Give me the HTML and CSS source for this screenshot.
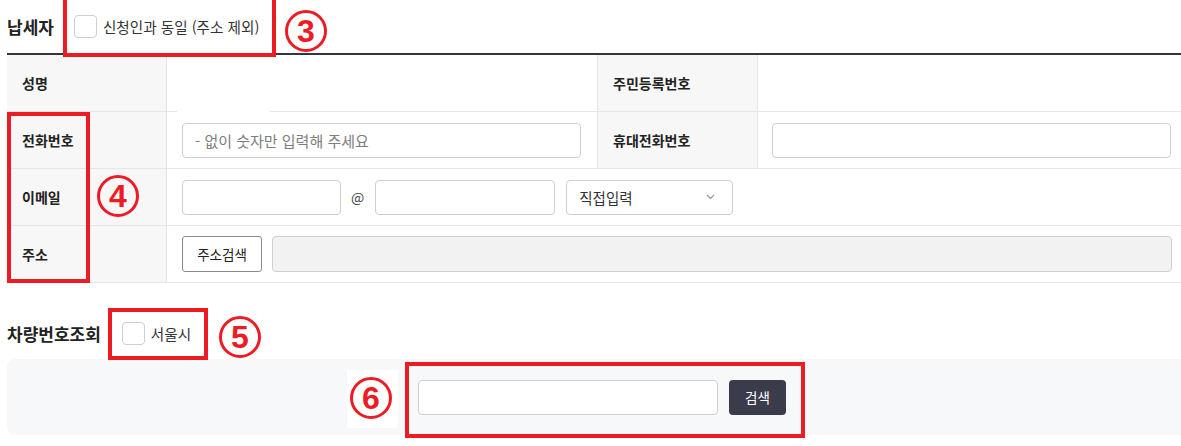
FILE: index.html
```html
<!DOCTYPE html>
<html lang="ko">
<head>
<meta charset="utf-8">
<title>납세자</title>
<link rel="stylesheet" href="styles.css">
</head>
<body>
<div class="page">
  <div class="sec-head sec-head-top">
    <h2 class="sec-title">납세자</h2>
    <label class="check check-top"><span class="box"></span><span class="check-text">신청인과 동일 (주소 제외)</span></label>
  </div>

  <div class="form-table">
    <div class="th">성명</div>
    <div class="td td-first"><span class="gap-mask"></span></div>
    <div class="th th-mid">주민등록번호</div>
    <div class="td td-last"></div>

    <div class="th">전화번호</div>
    <div class="td"><div class="input input-wide placeholder">- 없이 숫자만 입력해 주세요</div></div>
    <div class="th th-mid">휴대전화번호</div>
    <div class="td td-last"><div class="input input-wide"></div></div>

    <div class="th">이메일</div>
    <div class="td td-span">
      <div class="input input-mail1"></div>
      <span class="at">@</span>
      <div class="input input-mail2"></div>
      <div class="select">직접입력
        <svg class="chev" width="9" height="6" viewBox="0 0 9 6"><path d="M1 1 L4.5 4.5 L8 1" fill="none" stroke="#999" stroke-width="1.2"/></svg>
      </div>
    </div>

    <div class="th">주소</div>
    <div class="td td-span">
      <button class="btn-line">주소검색</button>
      <div class="input input-addr"></div>
    </div>
  </div>

  <div class="sec-head sec-head-car">
    <h2 class="sec-title">차량번호조회</h2>
    <label class="check check-car"><span class="box"></span><span class="check-text">서울시</span></label>
  </div>
  <div class="search-panel">
    <div class="input input-search"></div>
    <button class="btn-dark">검색</button>
  </div>

  <div class="anno-box anno-3"></div>
  <div class="anno-box anno-4"></div>
  <div class="anno-box anno-5"></div>
  <div class="anno-box anno-6"></div>
  <div class="anno-mask"></div>
  <div class="circle c3">3</div>
  <div class="circle c4">4</div>
  <div class="circle c5">5</div>
  <div class="circle c6">6</div>
</div>
</body>
</html>
```

FILE: styles.css
```css
* { box-sizing: border-box; }
html, body { margin: 0; padding: 0; background: #fff; }
body {
  font-family: "Noto Sans CJK KR", "Noto Sans", "Liberation Sans", sans-serif;
  color: #222;
  font-size: 14px;
}
.page {
  position: relative;
  width: 1181px;
  height: 446px;
  padding-left: 7px;
  overflow: hidden;
}
.sec-head {
  display: flex;
  align-items: center;
}
.sec-head-top {
  height: 55px;
  border-bottom: 2px solid #34353f;
}
.sec-title {
  margin: 0;
  font-size: 17px;
  font-weight: 700;
  color: #222;
}
.check {
  display: flex;
  align-items: center;
}
.check-top { margin-left: 20px; }
.box {
  width: 23px;
  height: 23px;
  border: 1px solid #cfcfcf;
  border-radius: 4px;
  background: #fff;
}
.check-text {
  margin-left: 6px;
  font-size: 14.6px;
  color: #333;
}
.form-table {
  display: grid;
  grid-template-columns: 160px 430px 161px 1fr;
}
.th, .td {
  height: 57px;
  border-bottom: 1px solid #e6e6e6;
  display: flex;
  align-items: center;
}
.th {
  background: #f7f7f7;
  border-right: 1px solid #e6e6e6;
  padding-left: 15px;
  font-weight: 700;
  font-size: 14px;
  color: #222;
}
.th-mid { border-left: 1px solid #e6e6e6; }
.td { padding-left: 15px; }
.td-first { position: relative; }
.td-last { padding-left: 14px; }
.td-span { grid-column: span 3; }
.gap-mask {
  position: absolute;
  left: 10px;
  bottom: -1px;
  width: 93px;
  height: 1px;
  background: #fff;
}
.input {
  height: 35px;
  border: 1px solid #cfcfcf;
  border-radius: 4px;
  background: #fff;
}
.input-wide { width: 399px; }
.placeholder {
  display: flex;
  align-items: center;
  padding-left: 12px;
  color: #7d7d7d;
  font-size: 15px;
}
.input-mail1 { width: 159px; }
.at {
  margin: 0 11px 0 10px;
  color: #444;
  font-size: 14px;
}
.input-mail2 { width: 180px; }
.select {
  width: 167px;
  height: 35px;
  margin-left: 11px;
  border: 1px solid #cfcfcf;
  border-radius: 4px;
  display: flex;
  align-items: center;
  justify-content: space-between;
  padding: 0 17px 0 12px;
  font-size: 14.5px;
  color: #333;
}
.btn-line {
  width: 80px;
  height: 36px;
  border: 1px solid #8a8a8a;
  border-radius: 3px;
  background: #fff;
  font-family: inherit;
  font-size: 13.5px;
  color: #222;
  padding: 0;
}
.input-addr {
  width: 900px;
  margin-left: 10px;
  height: 36px;
  background: #f2f2f2;
}
.sec-head-car {
  margin-top: 25px;
  height: 51px;
}
.check-car { margin-left: 21px; }
.search-panel {
  height: 76px;
  background: #f7f8fa;
  border-radius: 8px 0 0 8px;
  display: flex;
  align-items: center;
  padding-left: 411px;
}
.input-search { width: 300px; }
.btn-dark {
  width: 57px;
  height: 35px;
  margin-left: 11px;
  border: 0;
  border-radius: 4px;
  background: #3a3b4b;
  color: #fff;
  font-family: inherit;
  font-size: 13.5px;
  padding: 0;
}
.anno-box {
  position: absolute;
  border: 4px solid #ed1c24;
}
.anno-3 { left: 63px; top: -4px; width: 213px; height: 61px; }
.anno-4 { left: 7px; top: 112px; width: 83px; height: 171px; }
.anno-5 { left: 108px; top: 308px; width: 100px; height: 52px; }
.anno-6 { left: 405px; top: 362px; width: 400px; height: 76px; }
.anno-mask {
  position: absolute;
  left: 347px;
  top: 370px;
  width: 51px;
  height: 58px;
  background: #fff;
}
.circle {
  position: absolute;
  width: 42px;
  height: 42px;
  border: 3px solid #ed1c24;
  border-radius: 50%;
  color: #ed1c24;
  font-family: "Liberation Sans", Arial, sans-serif;
  font-weight: 700;
  font-size: 32px;
  line-height: 36px;
  text-align: center;
}
.c3 { left: 285px; top: 10px; }
.c4 { left: 97px; top: 175px; }
.c5 { left: 219px; top: 316px; }
.c6 { left: 350px; top: 377px; }
```
